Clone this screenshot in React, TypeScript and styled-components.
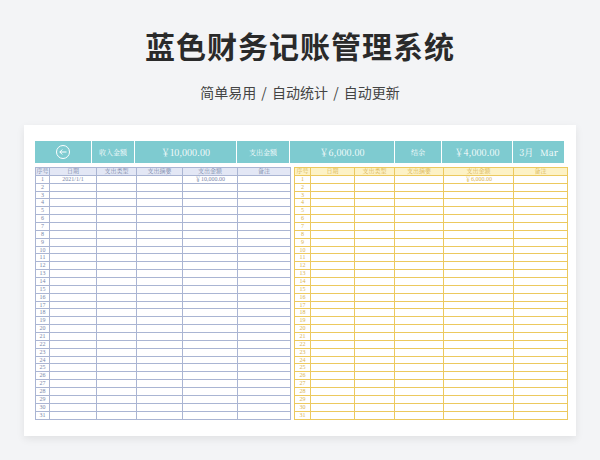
import React from "react";
import styled, { createGlobalStyle } from "styled-components";

const Global = createGlobalStyle`
  html, body { margin: 0; padding: 0; background: #f3f4f6; }
  body { font-family: "Noto Sans CJK SC", "Noto Sans", sans-serif; }
`;

const Page = styled.div`
  width: 600px; height: 460px; display: flex; flex-direction: column; align-items: center;
`;
const Title = styled.h1`
  margin: 25px 0 0; font-size: 30px; font-weight: 700; color: #2a2a2a; letter-spacing: 1px; line-height: 40px;
`;
const Sub = styled.div`
  margin-top: 17px; font-size: 14px; color: #444; line-height: 20px; word-spacing: 2px;
`;
const Card = styled.div`
  margin-top: 23px; width: 552px; height: 311px; background: #fff;
  box-shadow: 0 3px 8px rgba(0,0,0,0.08); box-sizing: border-box; padding: 16px 11px 0 11px;
`;
const Band = styled.div`
  display: grid; grid-template-columns: 57px 43px 102px 53px 105px 47px 71px 52px;
  height: 22px; gap: 0;
`;
const BandCell = styled.div<{ $big?: boolean }>`
  background: #7ecbd0; color: #fff; font-family: "Noto Serif CJK SC", "Liberation Serif", serif;
  font-size: ${p => (p.$big ? "9px" : "7px")}; display: flex; align-items: center; justify-content: center;
  border-right: 1px solid #fff; white-space: pre;
`;
const Tables = styled.div`
  display: flex; gap: 3px; margin-top: 4px;
`;
const Table = styled.div<{ $cols: string; $line: string; $head: string; $text: string }>`
  display: grid; grid-template-columns: ${p => p.$cols}; grid-auto-rows: 7.87px;
  border-top: 1px solid ${p => p.$line}; border-left: 1px solid ${p => p.$line};
  --line: ${p => p.$line}; --head: ${p => p.$head}; color: ${p => p.$text};
`;
const Cell = styled.div<{ $head?: boolean }>`
  border-right: 1px solid var(--line); border-bottom: 1px solid var(--line);
  background: ${p => (p.$head ? "var(--head)" : "transparent")};
  font-family: "Liberation Serif", "Noto Serif CJK SC", serif; font-size: 6px; line-height: 7px;
  text-align: center; overflow: hidden; white-space: nowrap; box-sizing: border-box;
`;

const heads = ["序号", "日期", "支出类型", "支出摘要", "支出金额", "备注"];

function Sheet({ cols, line, head, text, amount, date }: { cols: string; line: string; head: string; text: string; amount: string; date?: string }) {
  const cells: React.ReactNode[] = heads.map(h => <Cell key={h} $head>{h}</Cell>);
  for (let r = 1; r <= 31; r++) {
    const row = [String(r), r === 1 && date ? date : "", "", "", r === 1 ? amount : "", ""];
    row.forEach((v, i) => cells.push(<Cell key={r + "-" + i}>{v}</Cell>));
  }
  return <Table $cols={cols} $line={line} $head={head} $text={text}>{cells}</Table>;
}

export default function App() {
  return (
    <Page>
      <Global />
      <Title>蓝色财务记账管理系统</Title>
      <Sub>简单易用 / 自动统计 / 自动更新</Sub>
      <Card>
        <Band>
          <BandCell>
            <svg width="16" height="16" viewBox="0 0 16 16" fill="none" stroke="#fff" strokeWidth="1">
              <circle cx="8" cy="8" r="6.5" />
              <path d="M11.5 8H4.8M7.3 5.5 4.8 8l2.5 2.5" />
            </svg>
          </BandCell>
          <BandCell>收入金额</BandCell>
          <BandCell $big>￥10,000.00</BandCell>
          <BandCell>支出金额</BandCell>
          <BandCell $big>￥6,000.00</BandCell>
          <BandCell>结余</BandCell>
          <BandCell $big>￥4,000.00</BandCell>
          <BandCell $big>{"3月   Mar"}</BandCell>
        </Band>
        <Tables>
          <Sheet cols="14px 47px 40px 46px 55px 53px" line="#aab5d3" head="#e3e7f5" text="#7a87aa" amount="￥10,000.00" date="2021/1/1" />
          <Sheet cols="16px 44px 40px 49px 70px 54px" line="#ecc95e" head="#fdf2c6" text="#d9b450" amount="￥6,000.00" />
        </Tables>
      </Card>
    </Page>
  );
}
